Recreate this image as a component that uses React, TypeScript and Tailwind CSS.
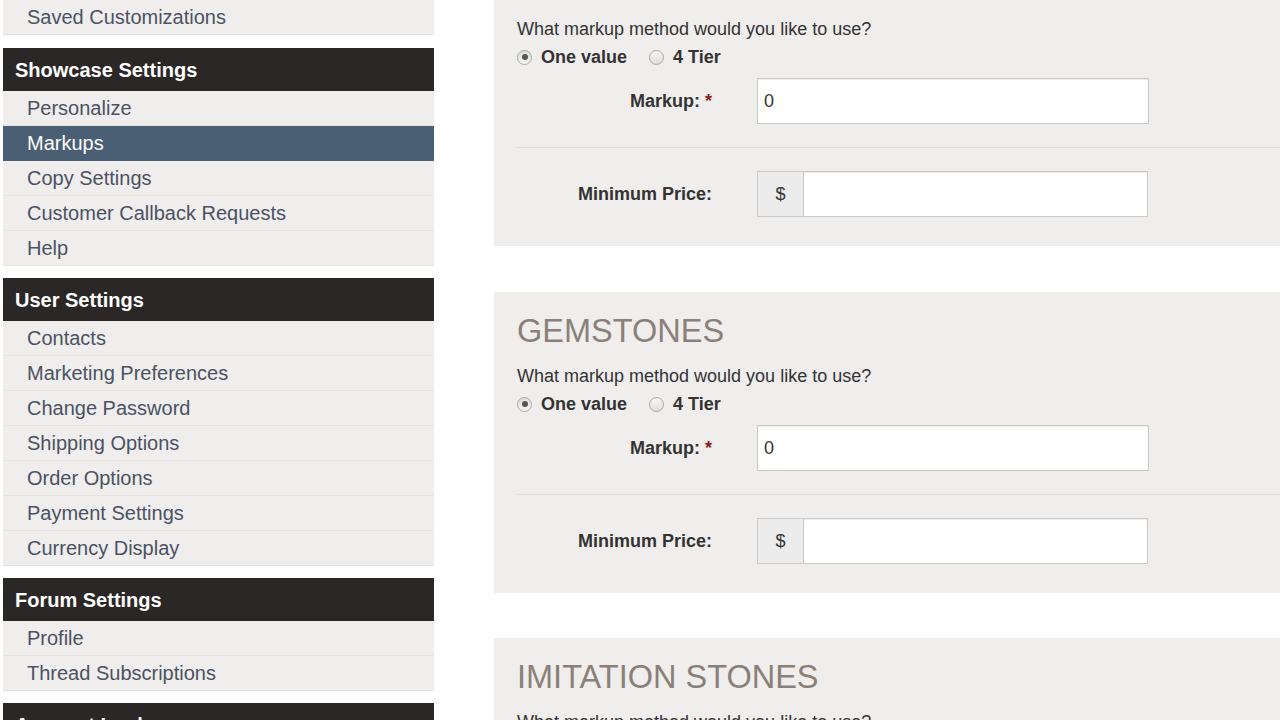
import React from "react";

const font = { fontFamily: '"Liberation Sans", Arial, Helvetica, sans-serif' };

type Section = { title: string; items: string[]; active?: string };

const sections: Section[] = [
  {
    title: "Showcase Settings",
    items: ["Personalize", "Markups", "Copy Settings", "Customer Callback Requests", "Help"],
    active: "Markups",
  },
  {
    title: "User Settings",
    items: [
      "Contacts",
      "Marketing Preferences",
      "Change Password",
      "Shipping Options",
      "Order Options",
      "Payment Settings",
      "Currency Display",
    ],
  },
  { title: "Forum Settings", items: ["Profile", "Thread Subscriptions"] },
  { title: "Account Lookup", items: [] },
];

function Item({ label, active }: { label: string; active?: boolean }) {
  return (
    <div
      className={
        "h-[35px] pl-[24px] flex items-center text-[20px] border-b " +
        (active
          ? "bg-[#4a5e74] text-white border-[#4a5e74]"
          : "bg-[#efeeec] text-[#4b5263] border-[#e5e3e0]")
      }
    >
      {label}
    </div>
  );
}

function Sidebar() {
  return (
    <div className="ml-[3px] w-[431px] shrink-0">
      <Item label="Saved Customizations" />
      {sections.map((s, i) => (
        <div key={s.title} className={i === 0 ? "mt-[13px]" : "mt-[12px]"}>
          <div className="h-[43px] pl-[12px] flex items-center bg-[#2b2726] text-white font-bold text-[20px]">
            {s.title}
          </div>
          {s.items.map((it) => (
            <Item key={it} label={it} active={it === s.active} />
          ))}
        </div>
      ))}
    </div>
  );
}

function Radio({ checked }: { checked?: boolean }) {
  return (
    <span
      className={
        "w-[15px] h-[15px] rounded-full border border-[#a9a9a9] flex items-center justify-center shrink-0 " +
        (checked
          ? "bg-gradient-to-b from-[#dcdcdc] to-[#f4f4f4]"
          : "bg-gradient-to-b from-[#f7f7f7] to-[#dedede]")
      }
    >
      {checked && <span className="w-[6px] h-[6px] rounded-full bg-[#555]" />}
    </span>
  );
}

function Panel({ title }: { title: string }) {
  return (
    <div className="bg-[#efeeec] h-[301px] pl-[23px] pt-[22px] shrink-0">
      <h2 className="h-[34px] leading-[34px] text-[32.5px] text-[#8a8079]">{title}</h2>
      <p className="mt-[18px] h-[20px] leading-[20px] text-[18px] text-[#333]">
        What markup method would you like to use?
      </p>
      <div className="mt-[8px] h-[20px] flex items-center text-[18px] font-bold text-[#333]">
        <Radio checked />
        <span className="ml-[9px]">One value</span>
        <span className="ml-[22px]">
          <Radio />
        </span>
        <span className="ml-[9px]">4 Tier</span>
      </div>
      <div className="mt-[11px] flex items-center">
        <div className="w-[195px] text-right text-[18px] font-bold text-[#333]">
          Markup: <span className="text-[#8b1a1a]">*</span>
        </div>
        <div className="ml-[45px] w-[392px] h-[46px] bg-white border border-[#c9c9c9] shadow-[inset_0_1px_1px_rgba(0,0,0,0.08)] flex items-center px-[6px] text-[18px] text-[#333]">
          0
        </div>
      </div>
      <div className="mt-[23px] h-px bg-[#e2e0dd]" />
      <div className="mt-[23px] flex items-center">
        <div className="w-[195px] text-right text-[18px] font-bold text-[#333]">Minimum Price:</div>
        <div className="ml-[45px] w-[391px] h-[46px] flex">
          <div className="w-[47px] h-full bg-[#ececec] border border-[#c9c9c9] flex items-center justify-center text-[18px] text-[#333]">
            $
          </div>
          <div className="flex-1 h-full bg-white border border-l-0 border-[#c9c9c9] shadow-[inset_0_1px_1px_rgba(0,0,0,0.08)]" />
        </div>
      </div>
    </div>
  );
}

export default function App() {
  return (
    <div className="w-[1280px] h-[720px] overflow-hidden bg-white flex items-start" style={font}>
      <Sidebar />
      <div className="ml-[60px] flex-1 flex flex-col mt-[-55px]">
        <Panel title="DIAMONDS" />
        <div className="h-[46px] shrink-0" />
        <Panel title="GEMSTONES" />
        <div className="h-[45px] shrink-0" />
        <Panel title="IMITATION STONES" />
      </div>
    </div>
  );
}
